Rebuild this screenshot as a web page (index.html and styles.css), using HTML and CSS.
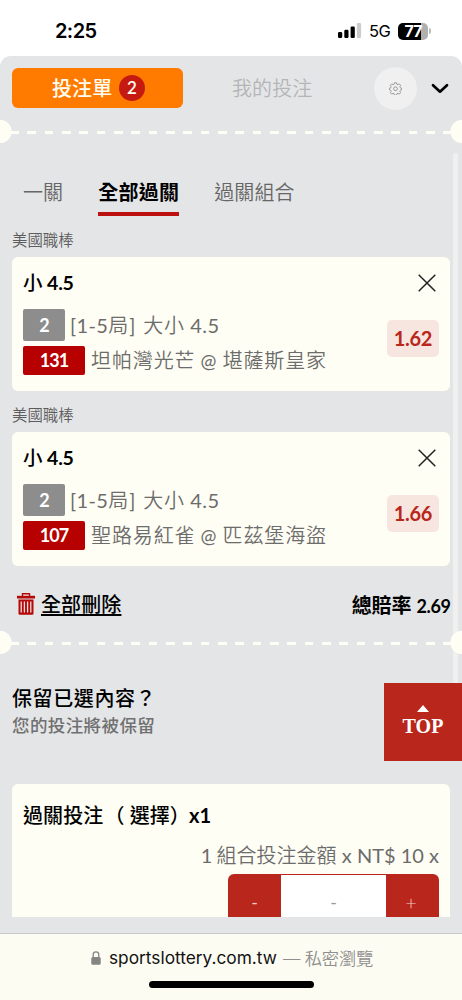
FILE: index.html
```html
<!DOCTYPE html>
<html lang="zh-Hant">
<head>
<meta charset="utf-8">
<title>投注單</title>
<link rel="stylesheet" href="styles.css">
</head>
<body>
<div class="phone">
  <header class="status">
    <span class="clock">2:25</span>
    <svg class="signal" width="24" height="16" viewBox="0 0 24 16"><rect x="0" y="9" width="4.2" height="6" rx="1.2"/><rect x="6.3" y="6.8" width="4.2" height="8.2" rx="1.2"/><rect x="12.6" y="3.5" width="4.2" height="11.5" rx="1.2"/><rect x="18.9" y="0" width="4.2" height="15" rx="1.2" fill="#ccc"/></svg>
    <span class="network">5G</span>
    <span class="battery"><span class="charge">77</span></span>
    <span class="battery-tip"></span>
  </header>

  <main class="slip">
    <nav class="top-nav">
      <div class="slip-btn"><span class="slip-label">投注單</span><span class="count">2</span></div>
      <div class="mine">我的投注</div>
      <div class="gear">
        <svg width="13" height="13" viewBox="0 0 24 26" fill="none" stroke="#8c8c8c" stroke-width="1.7" stroke-linejoin="round"><path d="M10 1.500h4l.8 3 2 .9 2.700-1.600 2.800 2.800-1.600 2.700.8 2 2.300.7v4l-2.300.7-.8 2 1.600 2.700-2.800 2.800-2.700-1.600-2 .9-.8 3h-4l-.8-3-2-.9-2.700 1.600-2.800-2.800 1.600-2.700-.8-2-2.300-.7v-4l2.300-.7.8-2-1.600-2.700 2.800-2.800 2.700 1.600 2-.9z"/><circle cx="12" cy="13.500" r="3.800"/></svg>
      </div>
      <svg class="chevron" width="18" height="12" viewBox="0 0 18 12" fill="none" stroke="#000" stroke-width="2.7" stroke-linecap="round" stroke-linejoin="round"><path d="M2 2.200l7 6.500 7-6.500"/></svg>
    </nav>
    <div class="perforation"></div>

    <div class="tabs">
      <span class="tab">一關</span><span class="tab active">全部過關</span><span class="tab">過關組合</span>
    </div>

    <div class="league">美國職棒</div>
    <section class="card">
      <div class="pick">小 <b>4.5</b></div>
      <div class="row"><span class="tag gray">2</span><span class="market"><span class="num">[1-5</span>局<span class="num">]</span> <span class="kind">大小</span> <span class="num">4.5</span></span></div>
      <div class="row second"><span class="tag red">131</span><span class="match">坦帕灣光芒<span class="at">@</span>堪薩斯皇家</span></div>
      <svg class="close" width="18" height="18" viewBox="0 0 18 18"><path d="M.7.7l16.600 16.600M17.300.7L.7 17.300"/></svg>
      <span class="odds">1.62</span>
    </section>

    <div class="league">美國職棒</div>
    <section class="card">
      <div class="pick">小 <b>4.5</b></div>
      <div class="row"><span class="tag gray">2</span><span class="market"><span class="num">[1-5</span>局<span class="num">]</span> <span class="kind">大小</span> <span class="num">4.5</span></span></div>
      <div class="row second"><span class="tag red">107</span><span class="match">聖路易紅雀<span class="at">@</span>匹茲堡海盜</span></div>
      <svg class="close" width="18" height="18" viewBox="0 0 18 18"><path d="M.7.7l16.600 16.600M17.300.7L.7 17.300"/></svg>
      <span class="odds">1.66</span>
    </section>

    <div class="totals">
      <svg class="trash" width="18" height="22" viewBox="0 0 18 22"><path d="M5.500 3V.8h7V3" fill="none" stroke="#b50909" stroke-width="1.400"/><path d="M0 2.800h18v2.700H0z" fill="#b50909"/><path d="M1.500 6.500h15V20.500a1.300 1.300 0 0 1-1.300 1.300H2.800a1.300 1.300 0 0 1-1.300-1.300z" fill="#b50909"/><path d="M4.200 8.500v11M7.400 8.500v11M10.600 8.500v11M13.800 8.500v11" stroke="#f0dede" stroke-width="1.300"/></svg>
      <span class="clear">全部刪除</span>
      <span class="total">總賠率 <b>2.69</b></span>
    </div>
    <div class="perforation"></div>

    <div class="keep">
      <div class="keep-title">保留已選內容？</div>
      <div class="keep-note">您的投注將被保留</div>
    </div>

    <section class="stake">
      <div class="stake-title"><span>過關投注</span><span class="option">（ 選擇）</span><b>x1</b></div>
      <div class="stake-line"><span class="num combo">1</span>組合投注金額 <span class="num">x NT$ 10 x</span></div>
      <div class="stepper"><span class="step">-</span><span class="amount">-</span><span class="step plus">+</span></div>
    </section>

    <div class="scrollbar"></div>
    <div class="to-top"><i></i>TOP</div>
  </main>

  <footer class="browser">
    <div class="address">
      <svg width="10" height="14" viewBox="0 0 10 14"><path d="M2.200 7V3.700a2.800 2.800 0 0 1 5.600 0V7" fill="none" stroke="#858583" stroke-width="1.300"/><rect x=".3" y="6" width="9.400" height="7.700" rx="1.500" fill="#858583"/></svg>
      <span class="domain">sportslottery.com.tw</span><span class="private">— 私密瀏覽</span>
    </div>
    <div class="home"></div>
  </footer>
</div>
</body>
</html>
```
FILE: styles.css
```css
* { box-sizing: border-box; }
body { margin: 0; background: #fff; font-family: Lato, "Noto Sans CJK TC", sans-serif; color: #111; }
svg { display: block; flex: none; }
.phone { width: 462px; height: 1000px; overflow: hidden; display: flex; flex-direction: column; white-space: nowrap; }

.status { height: 56px; flex: none; display: flex; align-items: center; padding: 6px 0 0 55px; font-family: Inter, sans-serif; color: #000; }
.clock { width: 283px; font-size: 20px; font-weight: 600; line-height: 24px; letter-spacing: -0.6px; }
.network { font-size: 16.500px; margin-left: 7px; width: 29px; letter-spacing: -0.5px; }
.battery { width: 30px; height: 17px; border-radius: 5px; background: linear-gradient(90deg, #000 77%, #b0b0b0 77%); }
.charge { display: block; color: #fff; font-size: 16px; font-weight: 700; line-height: 17px; text-align: center; letter-spacing: -0.9px; }
.battery-tip { width: 2px; height: 6px; margin-left: 1px; border-radius: 0 3px 3px 0; background: #bbb; }

.slip { position: relative; height: 877px; flex: none; background: #e4e5e7; border-radius: 11px 11px 0 0; display: flex; flex-direction: column; }
.num { font-weight: 400; }
.top-nav { height: 64px; flex: none; display: flex; align-items: center; padding-left: 11.500px; }
.slip-btn { width: 171px; height: 40px; border-radius: 6px; background: #ff7b00; display: flex; align-items: center; padding-left: 40.500px; color: #fffef4; }
.slip-label { font-size: 20px; line-height: 30px; font-weight: 500; letter-spacing: .1px; }
.count { margin-left: 6.500px; width: 26px; height: 26px; border-radius: 50%; background: #c41a12; font: 600 17px/26px Lato, sans-serif; text-align: center; }
.mine { width: 142px; margin-left: 49.500px; font-size: 20px; font-weight: 350; color: #b4b5b6; line-height: 30px; letter-spacing: .1px; }
.gear { width: 43px; height: 43px; border-radius: 50%; background: #f0f0f0; display: grid; place-items: center; }
.chevron { margin-left: 14px; margin-top: 2px; }

.perforation { height: 23px; flex: none; position: relative; z-index: 2; overflow: hidden; background:
  radial-gradient(circle at 0 11.500px, #fffef4 11.300px, transparent 12px),
  radial-gradient(circle at 462px 11.500px, #fffef4 11.300px, transparent 12px),
  repeating-linear-gradient(90deg, #fffef4 0 8.700px, transparent 8.700px 17.330px) 10px 11px / 445px 3px no-repeat; }

.tabs { height: 73px; flex: none; display: flex; align-items: flex-start; padding: 30px 0 0 23px; gap: 35px; }
.tab { height: 43px; font-size: 20px; line-height: 38px; font-weight: 350; color: #666; letter-spacing: .1px; }
.tab.active { font-weight: 700; color: #000; border-bottom: 4px solid #bd1010; letter-spacing: .25px; }

.league { height: 41px; flex: none; padding: 9px 0 0 12px; font-size: 15.400px; line-height: 30px; font-weight: 350; color: #5c5c5c; }
.card { position: relative; height: 134px; flex: none; margin: 0 12px; border-radius: 6px; background: #fffef4; padding: 10px 11px 0; }
.pick { font-size: 19.500px; font-weight: 500; line-height: 32px; color: #000; letter-spacing: -0.2px; }
.pick b { font-weight: 700; }
.row { height: 32px; margin-top: 10px; display: flex; align-items: center; color: #6c6c6c; font-weight: 350; font-size: 20px; letter-spacing: .9px; }
.row.second { height: 29px; margin-top: 5px; }
.tag { color: #fff; border-radius: 2px; font-size: 18px; font-weight: 700; text-align: center; letter-spacing: -0.900px; }
.tag.gray { width: 42px; height: 32px; line-height: 32px; background: #8d8d8d; }
.tag.red { width: 62px; height: 29px; line-height: 29px; background: #b70000; }
.market { margin-left: 5px; line-height: 32px; }
.market .num { letter-spacing: .4px; }
.kind { margin: 0 -1px 0 1px; }
.match { margin-left: 6px; line-height: 29px; }
.at { display: inline-block; width: 27px; padding-right: 1px; text-align: center; font-size: 19px; font-weight: 400; letter-spacing: 0; }
.close { position: absolute; right: 14.500px; top: 17px; fill: none; stroke: #222; stroke-width: 1.500px; }
.odds { position: absolute; right: 11px; top: 63px; width: 52px; height: 37px; border-radius: 5px; background: #f7e6df; color: #b9261b; font-size: 20px; font-weight: 700; line-height: 37px; text-align: center; letter-spacing: -0.300px; }

.totals { height: 65px; flex: none; display: flex; align-items: center; padding: 11px 11.500px 0 17px; color: #000; font-size: 20px; font-weight: 500; }
.clear { margin-left: 6px; flex: 1; line-height: 28px; text-decoration: underline; text-decoration-thickness: 2px; text-underline-offset: 2px; text-decoration-skip-ink: none; letter-spacing: .1px; }
.total { font-weight: 700; }
.total b { font-size: 18px; font-weight: 700; letter-spacing: -0.400px; }

.keep { height: 130px; flex: none; padding: 30px 12px 0; }
.keep-title { font-size: 20px; font-weight: 500; line-height: 28px; letter-spacing: .6px; color: #000; }
.keep-note { font-size: 17.500px; line-height: 27px; font-weight: 500; color: #707070; letter-spacing: .4px; }
.stake { height: 133px; flex: none; margin: 0 12px; border-radius: 6px 6px 0 0; background: #fffef4; padding: 15px 11px 0; overflow: hidden; }
.stake-title { display: flex; font-size: 20px; line-height: 32px; font-weight: 500; color: #000; letter-spacing: .1px; }
.stake-title b { font-weight: 700; }
.option { margin: 0 -1px 0 1px; }
.stake-line { height: 43px; line-height: 49px; font-size: 20px; font-weight: 350; color: #6c6c6c; text-align: right; }
.combo { margin-right: 4px; }
.stepper { width: 211px; height: 60px; margin-left: auto; border-radius: 6px; background: #b9261b; display: grid; grid-template-columns: 53px 105px 53px; padding-top: 1px; text-align: center; line-height: 54px; font-size: 18px; font-weight: 400; }
.step { color: #f0cbc5; }
.step.plus { font-size: 20px; font-weight: 300; padding-right: 3px; }
.amount { background: #fff; color: #999; }
.scrollbar { position: absolute; right: 4px; top: 97px; width: 5px; height: 575px; border-radius: 3px; background: #f0f0f1; z-index: 1; }
.to-top { position: absolute; right: 0; top: 626.500px; width: 78px; height: 78px; background: #b9261b; color: #fff; font: 700 20px/23px "Liberation Serif", serif; text-align: center; padding-top: 22px; z-index: 3; }
.to-top i { display: block; width: 0; margin: 0 auto 3px; border: 6px solid transparent; border-top: 0; border-bottom: 7px solid #fff; }

.browser { height: 67px; flex: none; border-top: 1px solid #c6c8ce; background: #fdfcf3; font-family: Inter, "Noto Sans CJK TC", sans-serif; display: flex; flex-direction: column; align-items: center; }
.address { width: 462px; height: 47px; padding-left: 91px; display: flex; align-items: center; font-size: 17.300px; }
.domain { margin-left: 8px; width: 174px; color: #111; }
.private { color: #8f8f8f; font-weight: 350; letter-spacing: -0.200px; }
.home { width: 165px; height: 7px; border-radius: 4px; background: #000; }
```
